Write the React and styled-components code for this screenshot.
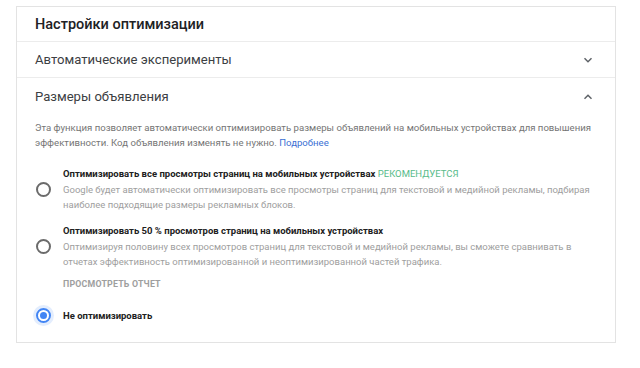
import React from "react";
import styled, { createGlobalStyle } from "styled-components";

const Global = createGlobalStyle`
  html, body {
    margin: 0;
    padding: 0;
    background: #fff;
    font-family: Roboto, "Liberation Sans", Arial, sans-serif;
  }
`;

const Page = styled.div`
  width: 640px;
  height: 368px;
  padding: 6px 24px 0 16px;
  box-sizing: border-box;
`;

const Card = styled.div`
  border: 1px solid #e3e3e3;
  background: #fff;
  height: 337px;
  box-sizing: border-box;
`;

const Title = styled.div`
  height: 34px;
  display: flex;
  align-items: center;
  padding: 0 18px;
  font-size: 14.5px;
  font-weight: 500;
  color: #202124;
  border-bottom: 1px solid #ececec;
`;

const SectionHead = styled.div`
  height: ${(p) => (p.$open ? 37 : 35)}px;
  display: flex;
  align-items: center;
  justify-content: space-between;
  padding: 0 18px;
  font-size: 13.1px;
  color: #3c4043;
  border-bottom: ${(p) => (p.$open ? "none" : "1px solid #ececec")};
`;

const Chevron = styled.svg`
  width: 10px;
  height: 10px;
  margin-right: 4px;
`;

const Body = styled.div`
  padding: 5px 18px 0;
`;

const Intro = styled.p`
  margin: 0 0 16px;
  font-size: 9.6px;
  line-height: 15px;
  color: #757575;
  a {
    color: #3b6fd4;
    text-decoration: none;
  }
`;

const Option = styled.div`
  display: flex;
  align-items: center;
  gap: 12px;
  margin-top: ${(p) => p.$top || 0}px;
`;

const Radio = styled.span`
  flex: none;
  width: 15px;
  height: 15px;
  box-sizing: border-box;
  border-radius: 50%;
  border: 2px solid ${(p) => (p.$on ? "#4285f4" : "#6b6b6b")};
  margin-left: 1px;
  display: flex;
  align-items: center;
  justify-content: center;
  box-shadow: ${(p) => (p.$on ? "0 0 0 3px rgba(66,133,244,0.15)" : "none")};
  &::after {
    content: "";
    display: ${(p) => (p.$on ? "block" : "none")};
    width: 7px;
    height: 7px;
    border-radius: 50%;
    background: #4285f4;
  }
`;

const OptText = styled.div`
  display: flex;
  flex-direction: column;
`;

const OptTitle = styled.div`
  font-size: 9.5px;
  font-weight: 700;
  color: #212121;
  line-height: 15px;
`;

const Recommended = styled.span`
  font-weight: 400;
  color: #57bb8a;
`;

const OptDesc = styled.div`
  font-size: 9.5px;
  line-height: 15px;
  color: #9e9e9e;
  margin-top: 1px;
`;

const ReportLink = styled.div`
  font-size: 8.8px;
  font-weight: 700;
  color: #9e9e9e;
  letter-spacing: 0.2px;
  line-height: 12px;
  margin: 9px 0 0 28px;
`;

const Down = () => (
  <Chevron viewBox="0 0 10 10">
    <path d="M1.5 3.2 L5 6.7 L8.5 3.2" fill="none" stroke="#5f6368" strokeWidth="1.5" />
  </Chevron>
);

const Up = () => (
  <Chevron viewBox="0 0 10 10">
    <path d="M1.5 6.7 L5 3.2 L8.5 6.7" fill="none" stroke="#5f6368" strokeWidth="1.5" />
  </Chevron>
);

export default function App() {
  return (
    <Page>
      <Global />
      <Card>
        <Title>Настройки оптимизации</Title>
        <SectionHead>
          Автоматические эксперименты
          <Down />
        </SectionHead>
        <SectionHead $open>
          Размеры объявления
          <Up />
        </SectionHead>
        <Body>
          <Intro>
            Эта функция позволяет автоматически оптимизировать размеры объявлений на мобильных устройствах для повышения
            эффективности. Код объявления изменять не нужно. <a href="#">Подробнее</a>
          </Intro>
          <Option>
            <Radio />
            <OptText>
              <OptTitle>
                Оптимизировать все просмотры страниц на мобильных устройствах <Recommended>РЕКОМЕНДУЕТСЯ</Recommended>
              </OptTitle>
              <OptDesc>
                Google будет автоматически оптимизировать все просмотры страниц для текстовой и медийной рекламы, подбирая
                наиболее подходящие размеры рекламных блоков.
              </OptDesc>
            </OptText>
          </Option>
          <Option $top={11}>
            <Radio />
            <OptText>
              <OptTitle>Оптимизировать 50 % просмотров страниц на мобильных устройствах</OptTitle>
              <OptDesc>
                Оптимизируя половину всех просмотров страниц для текстовой и медийной рекламы, вы сможете сравнивать в
                отчетах эффективность оптимизированной и неоптимизированной частей трафика.
              </OptDesc>
            </OptText>
          </Option>
          <ReportLink>ПРОСМОТРЕТЬ ОТЧЕТ</ReportLink>
          <Option $top={18}>
            <Radio $on />
            <OptTitle>Не оптимизировать</OptTitle>
          </Option>
        </Body>
      </Card>
    </Page>
  );
}
